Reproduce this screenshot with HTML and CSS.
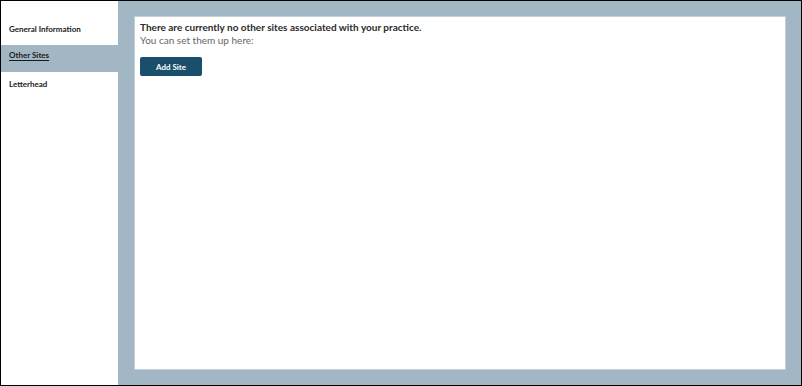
FILE: index.html
```html
<!DOCTYPE html>
<html lang="en">
<head>
    <meta charset="UTF-8">
    <title>Practice Settings</title>
    <link rel="stylesheet" href="styles.css">
</head>
<body>
    <div class="frame">
        <nav class="side-nav">
            <a class="nav-item" href="#">General Information</a>
            <a class="nav-item active" href="#">Other Sites</a>
            <a class="nav-item" href="#">Letterhead</a>
        </nav>
        <main class="content-area">
            <div class="panel">
                <p class="panel-title">There are currently no other sites associated with your practice.</p>
                <p class="panel-sub">You can set them up here:</p>
                <button class="add-button">Add Site</button>
            </div>
        </main>
    </div>
</body>
</html>
```

FILE: styles.css
```css
* {
    box-sizing: border-box;
}

:root {
    --slate: #a2b6c3;
    --button-color: #194f6b;
    --text-color: #222;
    --muted-color: #666;
}

body {
    margin: 0;
    font-family: Lato, 'Liberation Sans', sans-serif;
    color: var(--text-color);
    background: white;
}

.frame {
    display: flex;
    width: 802px;
    height: 386px;
    border: 1px solid #000;
}

.side-nav {
    width: 117px;
    flex-shrink: 0;
    padding-top: 16px;
    display: flex;
    flex-direction: column;
}

.nav-item {
    display: block;
    height: 28px;
    padding: 7px 0 0 8px;
    font-size: 8px;
    line-height: 10px;
    font-weight: bold;
    color: #1a1a1a;
    text-decoration: none;
}

.nav-item.active {
    background: var(--slate);
    height: 27px;
    padding-top: 5px;
    text-decoration: underline;
    text-decoration-thickness: 1px;
    text-underline-offset: 2px;
}

.content-area {
    flex: 1;
    background: var(--slate);
    padding: 15px 15px 15px 16px;
    display: flex;
}

.panel {
    flex: 1;
    background: white;
    border: 1px solid #c3d0d8;
    padding: 4px 5px;
}

.panel-title {
    margin: 0;
    font-size: 10px;
    font-weight: bold;
    line-height: 13px;
    color: #2a2a2a;
}

.panel-sub {
    margin: 0;
    font-size: 10px;
    line-height: 13px;
    color: var(--muted-color);
}

.add-button {
    display: block;
    margin-top: 10px;
    width: 62px;
    height: 19px;
    padding: 0;
    border: none;
    border-radius: 2px;
    background: var(--button-color);
    color: white;
    font-family: inherit;
    font-size: 8px;
    font-weight: bold;
    cursor: pointer;
}
```
